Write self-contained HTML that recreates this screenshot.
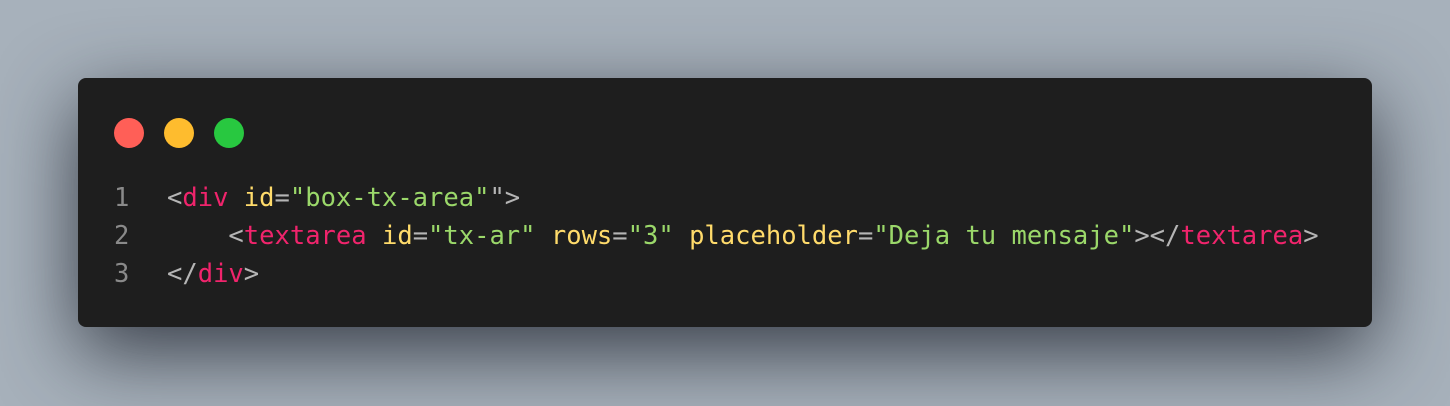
<!DOCTYPE html>
<html><head><meta charset="utf-8"><style>
html,body{margin:0;width:1450px;height:406px;overflow:hidden}
body{background:#a7b1bb;position:relative}
.card{position:absolute;left:78px;top:78px;width:1294px;height:249px;background:#1e1e1e;border-radius:8px;box-shadow:0 25px 80px rgba(35,40,50,.85)}
.dot{position:absolute;top:40px;width:30px;height:30px;border-radius:50%}
pre{position:absolute;left:0;top:101px;margin:0;font-family:"DejaVu Sans Mono",monospace;font-size:25.5px;line-height:38px;color:#a9a9a9}
.ln{display:inline-block;width:89px;text-align:left;padding-left:36px;box-sizing:border-box;color:#8a8a8a}
.t{color:#f0246c}.a{color:#ffdb6b}.s{color:#9bd86a}.p{color:#b5b5b5}
</style></head><body>
<div class="card">
<div class="dot" style="left:36px;background:#ff5f57"></div>
<div class="dot" style="left:86px;background:#febc2e"></div>
<div class="dot" style="left:136px;background:#28c840"></div>
<pre><span class="ln">1</span><span class="p">&lt;</span><span class="t">div</span> <span class="a">id</span><span class="p">=</span><span class="s">"box-tx-area"</span><span class="p">"&gt;</span>
<span class="ln">2</span>    <span class="p">&lt;</span><span class="t">textarea</span> <span class="a">id</span><span class="p">=</span><span class="s">"tx-ar"</span> <span class="a">rows</span><span class="p">=</span><span class="s">"3"</span> <span class="a">placeholder</span><span class="p">=</span><span class="s">"Deja tu mensaje"</span><span class="p">&gt;&lt;/</span><span class="t">textarea</span><span class="p">&gt;</span>
<span class="ln">3</span><span class="p">&lt;/</span><span class="t">div</span><span class="p">&gt;</span></pre>
</div>
</body></html>
